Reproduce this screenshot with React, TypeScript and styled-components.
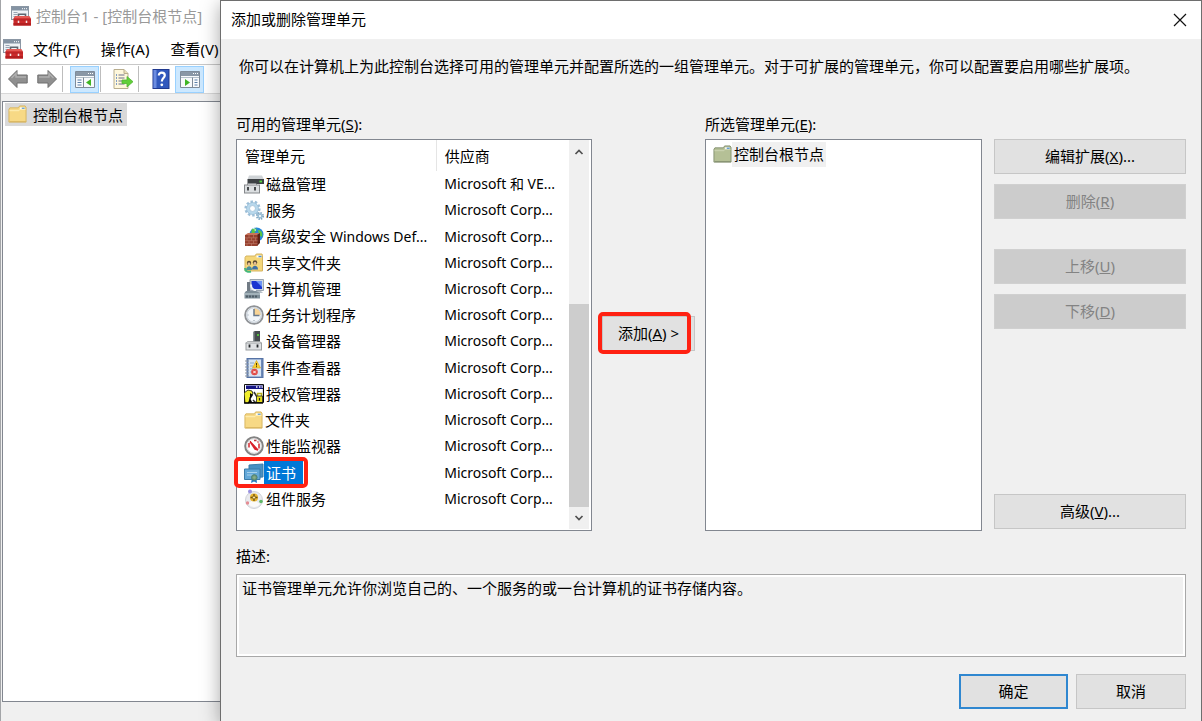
import React from "react";
import styled, { createGlobalStyle, css } from "styled-components";

const GlobalStyle = createGlobalStyle`
  *, *::before, *::after { box-sizing: border-box; }
  body {
    margin: 0;
    font-family: "Noto Sans", "Noto Sans CJK SC", sans-serif;
    font-size: 15px;
    line-height: 24px;
    color: #000;
    background: #f0f0f0;
  }
  button, textarea { font: inherit; color: inherit; }
`;

/* ---------- Shell ---------- */

const Desktop = styled.div`
  display: flex;
  min-height: 100vh;
  overflow: hidden;
`;

const ConsoleWindow = styled.section`
  flex: 0 0 220px;
  display: flex;
  flex-direction: column;
  overflow: hidden;
  border-left: 1px solid #a3a5a8;
  background: #f0f0f0;
  white-space: nowrap;
`;

const ConsoleTitle = styled.header`
  display: flex;
  align-items: center;
  gap: 5px;
  height: 34px;
  padding: 0 0 2px 10px;
  background: #fff;
  color: #999;
`;

const MenuBar = styled.nav`
  display: flex;
  align-items: center;
  height: 31px;
  padding-left: 2px;
  background: #fff;
  border-bottom: 1px solid #c8c8c8;
`;

const MenuItem = styled.button`
  flex: none;
  padding: 0 11px 0 10px;
  border: 0;
  background: none;
`;

const Toolbar = styled.div`
  display: flex;
  align-items: center;
  height: 29px;
  padding-left: 2px;
  background: #fff;
  border-bottom: 1px solid #d8d8d8;
`;

const ToolButton = styled.button<{ $active?: boolean }>`
  flex: none;
  display: flex;
  align-items: center;
  justify-content: center;
  width: 29px;
  height: 27px;
  padding: 0;
  border: 1px solid ${(p) => (p.$active ? "#99d1ff" : "transparent")};
  background: ${(p) => (p.$active ? "#cce8ff" : "transparent")};
`;

const ToolDivider = styled.span`
  flex: none;
  width: 1px;
  height: 26px;
  margin: 0 7px 0 1px;
  background: #bdbdbd;
`;

const TreePane = styled.div`
  flex: 1;
  margin: 7px 0 0 1px;
  padding: 1px 2px;
  border: solid #828790;
  border-width: 1px 0 1px 1px;
  background: #fff;
`;

const TreeNode = styled.div`
  display: inline-flex;
  align-items: center;
  gap: 6px;
  height: 23px;
  padding: 0 4px 0 3px;
  background: #d9d9d9;
`;

const StatusBar = styled.footer`
  height: 20px;
`;

/* ---------- Dialog ---------- */

const Dialog = styled.section`
  position: relative;
  flex: 1;
  min-width: 0;
  display: flex;
  flex-direction: column;
  border: solid #6e6e6e;
  border-width: 1px 1px 0 1px;
  background: #f0f0f0;
  box-shadow: 0 4px 18px rgba(0, 0, 0, 0.35);
`;

const DialogTitle = styled.header`
  display: flex;
  align-items: center;
  justify-content: space-between;
  height: 38px;
  padding: 0 14px 0 10px;
  background: #fff;
`;

const TitleText = styled.h1`
  margin: 0;
  padding-bottom: 2px;
  font-size: 15px;
  font-weight: 400;
`;

const CloseButton = styled.button`
  display: flex;
  padding: 0;
  border: 0;
  background: none;
`;

const DialogBody = styled.div`
  flex: 1;
  padding: 15px 15px 13px;
`;

const Intro = styled.p`
  margin: 0 0 34px 3px;
`;

const Columns = styled.div`
  display: grid;
  grid-template-columns: minmax(0, 356fr) 10px 93px 10px minmax(0, 277fr) 12px 192px;
  grid-template-rows: 27px 392px;
`;

const ListLabel = styled.span<{ $col: number }>`
  grid-column: ${(p) => p.$col};
  grid-row: 1;
`;

const listFrame = css`
  grid-row: 2;
  border: 1px solid #828790;
  background: #fff;
`;

const AvailableList = styled.div`
  ${listFrame}
  grid-column: 1;
  display: flex;
  padding: 0 2px 1px 0;
`;

const TableHolder = styled.div`
  flex: 1;
  min-width: 0;
`;

const SnapInTable = styled.table`
  width: 100%;
  height: 372px;
  table-layout: fixed;
  border-collapse: collapse;
  white-space: nowrap;
`;

const HeadCell = styled.th<{ $first?: boolean }>`
  width: ${(p) => (p.$first ? "60%" : "40%")};
  height: 31px;
  padding: 0 0 0 8px;
  border-right: ${(p) => (p.$first ? "1px solid #e5e5e5" : "0")};
  font-weight: 400;
  text-align: left;
`;

const NameCell = styled.td`
  height: 26px;
  padding: 0 0 0 7px;
`;

const VendorCell = styled.td`
  padding: 0 0 0 8px;
  font-size: 14px;
`;

const SnapIn = styled.span`
  position: relative;
  display: flex;
  align-items: center;
  width: fit-content;
  height: 24px;
`;

const SnapInName = styled.span<{ $selected?: boolean }>`
  padding: 0 ${(p) => (p.$selected ? 7 : 0)}px 0 2px;
  background: ${(p) => (p.$selected ? "#0078d7" : "transparent")};
  color: ${(p) => (p.$selected ? "#fff" : "inherit")};
`;

const Latin = styled.span`
  font-size: 14px;
`;

const Marker = styled.span<{ $inset: string }>`
  position: absolute;
  inset: ${(p) => p.$inset};
  border: 4px solid #ff2112;
  border-radius: 5px;
  pointer-events: none;
`;

const ScrollBar = styled.div`
  flex: 0 0 20px;
  display: flex;
  flex-direction: column;
  padding-top: 1px;
  background: #f0f0f0;
`;

const ScrollArrow = styled.button`
  display: flex;
  align-items: center;
  justify-content: center;
  height: 22px;
  padding: 0;
  border: 0;
  background: none;
`;

const ScrollTrack = styled.div`
  flex: 1;
  display: flex;
  flex-direction: column;
  justify-content: flex-end;
`;

const ScrollThumb = styled.div`
  height: 59%;
  background: #cdcdcd;
`;

const SelectedList = styled.div`
  ${listFrame}
  grid-column: 5;
  padding: 2px 7px;
`;

const SelectedNode = styled.div`
  display: flex;
  align-items: center;
`;

const SelectedName = styled.span`
  padding: 0 2px;
  line-height: 25px;
  background: #f0f0f0;
`;

const PushButton = styled.button<{ $primary?: boolean }>`
  height: 35px;
  padding: 0 0 2px;
  border: ${(p) => (p.$primary ? "2px solid #2f87d0" : "1px solid #c6c6c6")};
  background: #e1e1e1;
  white-space: nowrap;
  &:disabled {
    border-color: #d0d0d0;
    background: #ccc;
    color: #838383;
  }
`;

const AddArea = styled.div`
  grid-column: 3;
  grid-row: 2;
  position: relative;
  align-self: start;
  display: grid;
  margin-top: 177px;
`;

const ActionColumn = styled.div`
  grid-column: 7;
  grid-row: 2;
  display: flex;
  flex-direction: column;
  gap: 10px;
  padding-bottom: 2px;
`;

const ActionGroup = styled.div<{ $push?: "gap" | "end" }>`
  display: grid;
  gap: 10px;
  margin-top: ${(p) => (p.$push === "end" ? "auto" : p.$push === "gap" ? "20px" : "0")};
`;

const DescriptionLabel = styled.label`
  display: block;
  margin: 13px 0 6px;
`;

const Description = styled.textarea`
  display: block;
  width: 100%;
  height: 83px;
  padding: 1px 5px;
  border: 1px solid #a8a8a8;
  outline: 0;
  box-shadow: inset 0 0 0 2px #fff;
  background: #f0f0f0;
  resize: none;
`;

const DialogButtons = styled.footer`
  display: grid;
  grid-template-columns: 109px 110px;
  justify-content: end;
  gap: 8px;
  margin-top: 17px;
`;

/* ---------- Icons ---------- */

type IconProps = { size?: number; children: React.ReactNode };

const IconSvg = styled.svg`
  flex: none;
  display: block;
`;

const Icon = ({ size = 20, children }: IconProps) => (
  <IconSvg width={size} height={size} viewBox="0 0 20 20" aria-hidden="true">
    {children}
  </IconSvg>
);

const ToolboxIcon = () => (
  <Icon>
    <rect x="0.5" y="0.5" width="17" height="13" fill="#eef2f6" stroke="#8b97a4" />
    <rect x="1" y="1" width="16" height="3.5" fill="#8493a3" />
    <path d="M11 2.7h1M13 2.7h1M15 2.7h1" stroke="#fff" />
    <path d="M2.5 6.5h4M2.5 8.5h4M2.5 10.5h3" stroke="#98a5b3" />
    <path d="M7.500 11V8.300h7V11" fill="none" stroke="#5e6670" strokeWidth="1.600" />
    <path d="M2.500 12.500l2-2.500h13.500l2 2.500V19.500H2.500z" fill="#cb2a2b" />
    <path d="M4.500 10h13.500l1.400 2.200H3z" fill="#e35a55" />
    <path d="M2.500 17h17.500v2.500H2.500z" fill="#b41f21" />
    <path d="M7.500 14.500v2.500M15.500 14.500v2.500" stroke="#f6e6e6" strokeWidth="1.500" />
    <path d="M2.500 14h17.500" stroke="#a61c1e" strokeWidth=".6" />
  </Icon>
);

const FolderIcon = ({ tint }: { tint?: "green" }) => {
  const face = tint ? "#b5c096" : "#f7d985";
  const edge = tint ? "#849071" : "#d8b560";
  return (
    <Icon size={19}>
      <path d="M1 4.5L2 3h9l1.2-2H18l1 1.5V18H1z" fill={face} stroke={edge} />
      <path d="M12.5 2.5h5v2h-5z" fill="#fff" />
      <path d="M14.5 3.5h3" stroke="#4a90d9" strokeWidth="1.4" />
      <path d="M1.5 6h10l1.2-1.5h5.8" fill="none" stroke={tint ? "#ced6b5" : "#fff0b8"} />
      <path d="M2 17.5h17" stroke={edge} />
    </Icon>
  );
};

const ArrowIcon = ({ flip }: { flip?: boolean }) => (
  <Icon>
    <path
      d={flip ? "M19.5 10L11 1.5V6H.8v8H11v4.500z" : "M.5 10L9 1.5V6h10.2v8H9v4.500z"}
      fill="#8f8f8f"
      stroke="#6f6f6f"
    />
    <path d={flip ? "M2 8h10V4.5l4.5 4.5" : "M18 8H8V4.5L3.5 9"} fill="none" stroke="#b0b0b0" strokeWidth="1.4" />
  </Icon>
);

const PaneIcon = ({ right }: { right?: boolean }) => (
  <Icon>
    <path d="M.5 2.5h19v16H.5z" fill="#f8fafc" stroke="#7e8b99" />
    <path d="M1 3h18v4H1z" fill="#8997a6" />
    <path d="M13 4.5h1M15 4.5h1M17 4.5h1" stroke="#fff" />
    <path d="M1 8.5h18" stroke="#b5c0ca" />
    <path d={right ? "M12.5 8.5v10" : "M8.5 8.5v10"} stroke="#7e8b99" />
    <path
      d={right ? "M14.5 11h3M14.5 13.5h3M14.5 16h3" : "M2.5 11h4M2.5 13.5h4M2.5 16h4"}
      stroke="#587ea8"
      strokeWidth="1.2"
    />
    <path d={right ? "M5 10l5 3.5L5 17z" : "M16 10l-5 3.5L16 17z"} fill="#3fb524" />
  </Icon>
);

const ExportIcon = () => (
  <Icon>
    <path d="M1 .5h10l4 4v15H1z" fill="#fff8dc" stroke="#b8ad8e" />
    <path d="M11 .5v4h4" fill="#eadfb8" stroke="#b8ad8e" />
    <path d="M5.5 6h6M5.5 9h6M5.5 12h5M5.5 15h6" stroke="#6b6f8c" />
    <path d="M3 6h1M3 9h1M3 12h1M3 15h1" stroke="#5b80c0" strokeWidth="1.3" />
    <path d="M9 11h5V7.5l6 5.2-6 5.3v-3.5H9z" fill="#62cf3a" stroke="#52b532" strokeWidth=".8" />
  </Icon>
);

const HelpIcon = () => (
  <Icon>
    <rect x="2" y="0.5" width="16" height="19" fill="#3158bd" stroke="#20398f" />
    <path d="M2.5 1h3v18h-3z" fill="#6c8ce0" />
    <path
      d="M7.8 6.500c0-4 6-3.500 6-.2 0 2.700-3 2.900-3 6.200"
      fill="none"
      stroke="#fff"
      strokeWidth="2.2"
    />
    <circle cx="10.8" cy="15.8" r="1.4" fill="#fff" />
  </Icon>
);

const DiskIcon = () => (
  <Icon>
    <path d="M5 1.5h13l2 4H3.5z" fill="#cfd3d6" />
    <path d="M3.5 5H20v5H3.5z" fill="#3d4144" />
    <path d="M15.5 7.5H18" stroke="#57e03e" strokeWidth="1.8" />
    <path d="M4 9.5h8l1 2H3z" fill="#fff" stroke="#85888b" strokeWidth=".8" />
    <rect x="0.5" y="11" width="15" height="8" fill="#dcdfe1" stroke="#85888b" />
    <path d="M4 13v3.5M11 13v3.5" stroke="#383b3e" strokeWidth="1.8" />
  </Icon>
);

const GearsIcon = () => (
  <Icon>
    <circle cx="8.5" cy="8.5" r="6.8" fill="none" stroke="#9dbfd8" strokeWidth="2.6" strokeDasharray="2.4 1.87" />
    <circle cx="8.5" cy="8.5" r="4.5" fill="#fff" stroke="#b8d8ec" strokeWidth="3.2" />
    <circle cx="8.5" cy="8.5" r="6" fill="none" stroke="#8fb4ce" strokeWidth=".6" />
    <circle cx="8.5" cy="8.5" r="2.9" fill="none" stroke="#8fb4ce" strokeWidth=".6" />
    <circle cx="16" cy="16" r="3" fill="none" stroke="#7fa5c0" strokeWidth="2" strokeDasharray="1.4 .96" />
    <circle cx="16" cy="16" r="1.8" fill="#fff" stroke="#9abfd7" strokeWidth="1.4" />
  </Icon>
);

const FirewallIcon = () => (
  <Icon>
    <circle cx="12.5" cy="7.5" r="7" fill="#2787dc" />
    <path d="M8 2c3-2 6 0 4 2s-2 4-5 4M14 3c4 0 5 4 4 7l-3-2z" fill="#5cc542" />
    <path d="M9 1.5c2 0 3 1 2 2.5" stroke="#c9ecff" fill="none" />
    <path d="M1 8l3-2h11.500L13 8z" fill="#c8735a" />
    <path d="M13 8l3-2v10l-3 3z" fill="#5d2118" />
    <rect x="1" y="8" width="12.5" height="11" fill="#96402e" />
    <path
      d="M1 10.8h12.5M1 13.7h12.5M1 16.6h12.5M5 8v2.8M9.500 8v2.8M3 10.8v2.9M7.500 10.8v2.9M11.500 10.8v2.9M5 13.7v2.9M9.500 13.7v2.9M3 16.6v2.400M7.500 16.6v2.400"
      stroke="#c07d6c"
      strokeWidth=".6"
    />
  </Icon>
);

const SharedFolderIcon = () => (
  <Icon>
    <path d="M1 4.5L2 3h9l1.2-2H18l.5 1.5V18H1z" fill="#f4d679" stroke="#d5b461" />
    <path d="M12.5 2.5h5v2h-5z" fill="#fff" />
    <path d="M14.5 3.5h3" stroke="#4a90d9" strokeWidth="1.4" />
    <circle cx="5" cy="10" r="2.2" fill="#5a4a32" />
    <circle cx="5" cy="11" r="1.400" fill="#e8c196" />
    <circle cx="11" cy="9.500" r="2.2" fill="#5a4a32" />
    <circle cx="11" cy="10.500" r="1.400" fill="#e8c196" />
    <path d="M2 17c.5-5 6-5 6 0z" fill="#4c8f9c" />
    <path d="M8 16.500c0-5 6-5 6 0z" fill="#3e6fa6" />
    <path d="M1 15c0 3.500 3 4.200 6 3.500" fill="none" stroke="#43b97c" strokeWidth="2" />
  </Icon>
);

const ComputerIcon = () => (
  <Icon>
    <path d="M6 .5h13.5v11H6z" fill="#cbd5e0" stroke="#9aa5b0" />
    <path d="M7.5 2H18v8H7.5z" fill="#1a35d1" />
    <path d="M12 2h6v6z" fill="#6c93f4" />
    <path d="M3 3h3v9H3z" fill="#717b85" />
    <path d="M7 5.500c0 3.500 1 5 5 6" fill="none" stroke="#f0f4f6" strokeWidth="2" />
    <path d="M10 12h7l2 2h-8z" fill="#b7c0c8" />
    <path d="M2 12h10l4 2v5.5H.5V14z" fill="#7d8d97" />
    <path d="M1 15h15" stroke="#c8d6db" />
    <path d="M3 16.5v2M6 16.5v2M9 16.5v2M12 16.5v2" stroke="#3d4b55" strokeWidth="1.4" />
  </Icon>
);

const ClockIcon = () => (
  <Icon>
    <circle cx="10" cy="10" r="8.900" fill="#f2f6fa" stroke="#8f9296" strokeWidth="1.8" />
    <path d="M10 10V3a7 7 0 0 1 7 7z" fill="#f8d496" />
    <circle cx="10" cy="10" r="7.3" fill="none" stroke="#c6ced7" />
    <path d="M10 4v6.5h5.5" fill="none" stroke="#68798c" strokeWidth="1.5" />
    <path d="M10 16v-1M3.5 10h1" stroke="#8c98a4" />
  </Icon>
);

const DeviceIcon = () => (
  <Icon>
    <path d="M9 1l2-1h5v11H9z" fill="#454b4e" />
    <path d="M9 1h1.5v10H9z" fill="#8a9296" />
    <path d="M13 4h2" stroke="#56e039" strokeWidth="1.6" />
    <path d="M3.500 10.5h12.500l1.5 2H2z" fill="#fff" stroke="#96999c" strokeWidth=".8" />
    <rect x="2" y="12" width="15.500" height="7" fill="#e0e2e4" stroke="#9b9fa2" />
    <path d="M5.500 13.5v3M13.500 13.5v3" stroke="#25282b" strokeWidth="1.800" />
  </Icon>
);

const EventIcon = () => (
  <Icon>
    <rect x="3" y="0.5" width="16" height="19" fill="#6d89b8" stroke="#5673a5" />
    <rect x="4.5" y="1.5" width="12.5" height="17" fill="#d6e3f2" />
    <path d="M6 5h4M6 8h3M6 11h3M6 14h2" stroke="#8da7c8" />
    <path d="M1 3h4M1 6h4M1 9h4M1 12h4M1 15h4M1 18h4" stroke="#8b95a0" strokeWidth="1.2" />
    <path d="M12.5 2.5l4 7.5h-8z" fill="#fbd02e" stroke="#d9ab25" strokeWidth=".7" />
    <path d="M12.5 5v2.5M12.5 8.2v1" stroke="#473706" />
    <circle cx="10.5" cy="14" r="3.3" fill="#e04a45" />
    <path d="M9.300 12.800l2.400 2.400M11.700 12.800l-2.400 2.400" stroke="#fff" />
  </Icon>
);

const AuthorizationIcon = () => (
  <Icon>
    <path d="M.5.5h19v18H.5z" fill="#fff" stroke="#111" />
    <path d="M2 1.5h17V5H2z" fill="#161685" />
    <path d="M12 3h1.5M15 3h1.5M17.500 3H19" stroke="#fff" strokeWidth="1.4" />
    <path d="M0 9l4-3 4 1 1 3-3 3-1 6H1z" fill="#f1ee2c" stroke="#111" strokeWidth=".8" />
    <path d="M6 9l3 2-2.500 4 2 4H4l2-5z" fill="#090909" />
    <path d="M10 8l3 5M9 16l3 3" stroke="#333" strokeWidth="1.5" />
    <path d="M13.500 12V9.500h4V12" fill="none" stroke="#b9b020" strokeWidth="1.5" />
    <path d="M12.500 12h6v6.500h-6z" fill="#e4dc1c" stroke="#222" strokeWidth=".8" />
    <path d="M15.500 14v2.500" stroke="#222" strokeWidth="1.2" />
    <path d="M0 19h19" stroke="#000" strokeWidth="1.4" />
    <path d="M19.400 1v17" stroke="#000" />
  </Icon>
);

const GaugeIcon = () => (
  <Icon>
    <circle cx="10" cy="10" r="8.8" fill="#fafafa" stroke="#838383" strokeWidth="2" />
    <circle cx="10" cy="10" r="7.2" fill="#fff" stroke="#ccc" strokeWidth=".7" />
    <path d="M5 11.500V7M15 12.500V7.500" stroke="#d5343a" strokeWidth="1.6" />
    <path d="M6 5.500l8 8.500-3-1z" fill="#d9202b" stroke="#d9202b" strokeWidth="1.5" />
    <path d="M10 4.5h2.5M13.500 5.500l1 1" stroke="#c0353c" strokeWidth="1.3" />
  </Icon>
);

const CertificateIcon = () => (
  <Icon>
    <path d="M5 2l14-1v13L5 15z" fill="#4890c2" stroke="#3b7ca9" />
    <path d="M.5 6H16v10.5H.5z" fill="#63a8d8" stroke="#3b7ca9" />
    <path d="M3 9.5h10M3 12h6" stroke="#a9d2ec" />
    <path d="M8 15l-1 5 3-1.500 3 1.500-.5-5z" fill="#2d7fc4" />
    <circle cx="10.3" cy="14.500" r="2.800" fill="#6c9a7c" stroke="#4e8070" />
    <circle cx="10.3" cy="14.500" r="1.2" fill="#8bae88" />
  </Icon>
);

const ComponentIcon = () => (
  <Icon>
    <circle cx="10" cy="11" r="8.500" fill="#e9eaee" stroke="#d2d4d9" />
    <path d="M4 14a7 7 0 0 0 12 1l-6-4z" fill="#fafafa" />
    <circle cx="10" cy="8.500" r="4" fill="#e9b52e" />
    <path d="M10 5v7M6.500 8.500h7" stroke="#6e5212" strokeWidth="1.300" />
    <circle cx="10" cy="8.500" r="1.500" fill="#ffe79a" stroke="#6e5212" strokeWidth=".7" />
    <circle cx="6" cy="2.500" r="2" fill="#9a92e0" />
    <circle cx="3.500" cy="14" r="1.700" fill="#e58d94" />
    <circle cx="17" cy="12.500" r="1.800" fill="#5fb866" />
  </Icon>
);

const Chevron = ({ down }: { down?: boolean }) => (
  <IconSvg width="10" height="10" viewBox="0 0 10 10" aria-hidden="true">
    <path d={down ? "M1.500 3L5 6.500 8.500 3" : "M1.500 7L5 3.500 8.500 7"} fill="none" stroke="#505050" strokeWidth="1.700" />
  </IconSvg>
);

/* ---------- Data ---------- */

type Item = { name: React.ReactNode; vendor: string; icon: React.ReactNode; selected?: boolean };

const corp = "Microsoft Corp...";

const snapIns: Item[] = [
  { name: "磁盘管理", vendor: "Microsoft 和 VE...", icon: <DiskIcon /> },
  { name: "服务", vendor: corp, icon: <GearsIcon /> },
  { name: <>高级安全 <Latin>Windows Def...</Latin></>, vendor: corp, icon: <FirewallIcon /> },
  { name: "共享文件夹", vendor: corp, icon: <SharedFolderIcon /> },
  { name: "计算机管理", vendor: corp, icon: <ComputerIcon /> },
  { name: "任务计划程序", vendor: corp, icon: <ClockIcon /> },
  { name: "设备管理器", vendor: corp, icon: <DeviceIcon /> },
  { name: "事件查看器", vendor: corp, icon: <EventIcon /> },
  { name: "授权管理器", vendor: corp, icon: <AuthorizationIcon /> },
  { name: "文件夹", vendor: corp, icon: <FolderIcon /> },
  { name: "性能监视器", vendor: corp, icon: <GaugeIcon /> },
  { name: "证书", vendor: corp, icon: <CertificateIcon />, selected: true },
  { name: "组件服务", vendor: corp, icon: <ComponentIcon /> },
];

/* ---------- Views ---------- */

const Console = () => (
  <ConsoleWindow>
    <ConsoleTitle>
      <ToolboxIcon />
      <span>控制台1 - [控制台根节点]</span>
    </ConsoleTitle>
    <MenuBar>
      <ToolboxIcon />
      <MenuItem>文件(F)</MenuItem>
      <MenuItem>操作(A)</MenuItem>
      <MenuItem>查看(V)</MenuItem>
    </MenuBar>
    <Toolbar>
      <ToolButton aria-label="后退"><ArrowIcon /></ToolButton>
      <ToolButton aria-label="前进"><ArrowIcon flip /></ToolButton>
      <ToolDivider />
      <ToolButton $active aria-label="控制台树"><PaneIcon /></ToolButton>
      <ToolDivider />
      <ToolButton aria-label="导出列表"><ExportIcon /></ToolButton>
      <ToolDivider />
      <ToolButton aria-label="帮助"><HelpIcon /></ToolButton>
      <ToolButton $active aria-label="操作窗格"><PaneIcon right /></ToolButton>
    </Toolbar>
    <TreePane>
      <TreeNode>
        <FolderIcon />
        <span>控制台根节点</span>
      </TreeNode>
    </TreePane>
    <StatusBar />
  </ConsoleWindow>
);

export default function App() {
  return (
    <>
      <GlobalStyle />
      <Desktop>
        <Console />
        <Dialog role="dialog" aria-labelledby="dialog-title">
          <DialogTitle>
            <TitleText id="dialog-title">添加或删除管理单元</TitleText>
            <CloseButton aria-label="关闭">
              <IconSvg width="14" height="14" viewBox="0 0 14 14" aria-hidden="true">
                <path d="M1 1l12 12M13 1L1 13" stroke="#111" strokeWidth="1.200" />
              </IconSvg>
            </CloseButton>
          </DialogTitle>
          <DialogBody>
            <Intro>
              你可以在计算机上为此控制台选择可用的管理单元并配置所选的一组管理单元。对于可扩展的管理单元，你可以配置要启用哪些扩展项。
            </Intro>
            <Columns>
              <ListLabel $col={1} id="available-label">可用的管理单元(<u>S</u>):</ListLabel>
              <AvailableList>
                <TableHolder>
                  <SnapInTable aria-labelledby="available-label">
                    <thead>
                      <tr>
                        <HeadCell $first>管理单元</HeadCell>
                        <HeadCell>供应商</HeadCell>
                      </tr>
                    </thead>
                    <tbody>
                      {snapIns.map((item, i) => (
                        <tr key={i} aria-selected={item.selected}>
                          <NameCell>
                            <SnapIn>
                              {item.icon}
                              <SnapInName $selected={item.selected}>{item.name}</SnapInName>
                              {item.selected && <Marker $inset="-4px -5px -3px -10px" />}
                            </SnapIn>
                          </NameCell>
                          <VendorCell>{item.vendor}</VendorCell>
                        </tr>
                      ))}
                    </tbody>
                  </SnapInTable>
                </TableHolder>
                <ScrollBar>
                  <ScrollArrow aria-label="向上滚动"><Chevron /></ScrollArrow>
                  <ScrollTrack><ScrollThumb /></ScrollTrack>
                  <ScrollArrow aria-label="向下滚动"><Chevron down /></ScrollArrow>
                </ScrollBar>
              </AvailableList>

              <AddArea>
                <PushButton>添加(<u>A</u>) &gt;</PushButton>
                <Marker $inset="-4px 4px -3px -4px" />
              </AddArea>

              <ListLabel $col={5}>所选管理单元(<u>E</u>):</ListLabel>
              <SelectedList>
                <SelectedNode>
                  <FolderIcon tint="green" />
                  <SelectedName>控制台根节点</SelectedName>
                </SelectedNode>
              </SelectedList>

              <ActionColumn>
                <ActionGroup>
                  <PushButton>编辑扩展(<u>X</u>)...</PushButton>
                  <PushButton disabled>删除(<u>R</u>)</PushButton>
                </ActionGroup>
                <ActionGroup $push="gap">
                  <PushButton disabled>上移(<u>U</u>)</PushButton>
                  <PushButton disabled>下移(<u>D</u>)</PushButton>
                </ActionGroup>
                <ActionGroup $push="end">
                  <PushButton>高级(<u>V</u>)...</PushButton>
                </ActionGroup>
              </ActionColumn>
            </Columns>

            <DescriptionLabel htmlFor="description">描述:</DescriptionLabel>
            <Description
              id="description"
              readOnly
              defaultValue="证书管理单元允许你浏览自己的、一个服务的或一台计算机的证书存储内容。"
            />
            <DialogButtons>
              <PushButton $primary>确定</PushButton>
              <PushButton>取消</PushButton>
            </DialogButtons>
          </DialogBody>
        </Dialog>
      </Desktop>
    </>
  );
}
